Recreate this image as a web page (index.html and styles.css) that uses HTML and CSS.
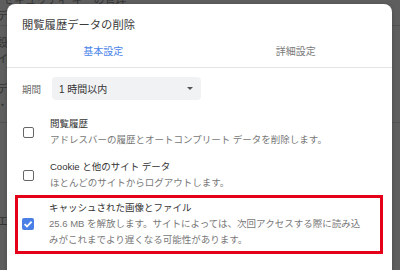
FILE: index.html
```html
<!DOCTYPE html>
<html lang="ja">
<head>
    <meta charset="UTF-8">
    <meta name="viewport" content="width=device-width, initial-scale=1.0">
    <title>閲覧履歴データの削除</title>
    <link rel="stylesheet" href="styles.css">
</head>
<body>
    <div class="page">
        <div class="backdrop">
            <div class="bg-section bg-first">
                <p class="bg-line bg-clip">セキュリティ キーの管理</p>
                <p class="bg-line">デバイス</p>
            </div>
            <div class="bg-section bg-second">
                <p class="bg-line">設定</p>
                <p class="bg-line">イメージ</p>
                <p class="bg-line bg-spaced">デザイン</p>
                <p class="bg-line">・</p>
            </div>
            <div class="bg-section bg-third">
                <p class="bg-line">エクステンション</p>
            </div>
        </div>

        <div class="dialog">
            <h1 class="dialog-title">閲覧履歴データの削除</h1>
            <div class="tabs">
                <div class="tab active">基本設定</div>
                <div class="tab">詳細設定</div>
            </div>

            <div class="period">
                <span class="period-label">期間</span>
                <div class="select">
                    <span>1 時間以内</span>
                    <span class="select-arrow"></span>
                </div>
            </div>

            <div class="options">
                <div class="option">
                    <span class="checkbox"></span>
                    <div class="option-text">
                        <div class="option-label">閲覧履歴</div>
                        <div class="option-desc">アドレスバーの履歴とオートコンプリート データを削除します。</div>
                    </div>
                </div>
                <div class="option">
                    <span class="checkbox"></span>
                    <div class="option-text">
                        <div class="option-label">Cookie と他のサイト データ</div>
                        <div class="option-desc">ほとんどのサイトからログアウトします。</div>
                    </div>
                </div>
                <div class="option highlight">
                    <span class="checkbox checked">
                        <svg viewBox="0 0 12 12" width="12" height="12"><path d="M2.6 6.2 L5 8.5 L9.6 3.6" fill="none" stroke="#fff" stroke-width="1.8"/></svg>
                    </span>
                    <div class="option-text">
                        <div class="option-label">キャッシュされた画像とファイル</div>
                        <div class="option-desc">25.6 MB を解放します。サイトによっては、次回アクセスする際に読み込みがこれまでより遅くなる可能性があります。</div>
                    </div>
                </div>
            </div>
        </div>
    </div>
</body>
</html>
```

FILE: styles.css
```css
body {
    margin: 0;
    padding: 0;
    font-family: "Liberation Sans", "Noto Sans CJK JP", sans-serif;
    background-color: #5e5e5e;
}
.page {
    position: relative;
    width: 400px;
    height: 270px;
    overflow: hidden;
}
.backdrop {
    color: #353535;
    font-size: 11px;
    line-height: 14px;
}
.bg-section {
    border-bottom: 1px solid #525252;
    padding-left: 0;
}
.bg-first {
    height: 32px;
}
.bg-second {
    height: 97px;
    padding-top: 10px;
    box-sizing: border-box;
}
.bg-third {
    border-bottom: none;
    padding-top: 91px;
}
.bg-line {
    margin: 0 0 2px -3px;
}
.bg-clip {
    margin-top: -7px;
    margin-left: 3px;
}
.bg-spaced {
    margin-top: 16px;
}
.dialog {
    position: absolute;
    left: 7px;
    top: 4px;
    width: 385px;
    height: 290px;
    background-color: #fff;
    border-radius: 8px;
    box-shadow: 0 1px 4px rgba(0,0,0,0.2);
}
.dialog-title {
    margin: 0;
    padding: 13px 15px 0;
    font-size: 11.3px;
    font-weight: normal;
    line-height: 16px;
    color: #3c3c3c;
}
.tabs {
    display: grid;
    grid-template-columns: 1fr 1fr;
    border-bottom: 1px solid #e3e3e3;
}
.tab {
    text-align: center;
    padding: 11px 0 7px;
    font-size: 10px;
    line-height: 16px;
    color: #7a7a7a;
}
.tab.active {
    color: #4b84ea;
}
.period {
    display: flex;
    align-items: center;
    margin-top: 9px;
    padding-left: 15px;
}
.period-label {
    width: 30px;
    font-size: 9.5px;
    color: #6a6a6a;
}
.select {
    display: flex;
    align-items: center;
    justify-content: space-between;
    width: 149px;
    height: 23px;
    padding: 0 8px 0 7px;
    box-sizing: border-box;
    background-color: #f1f2f4;
    border-radius: 4px;
    font-size: 10px;
    color: #333;
}
.select-arrow {
    width: 0;
    height: 0;
    border-left: 3px solid transparent;
    border-right: 3px solid transparent;
    border-top: 3px solid #555;
}
.options {
    display: flex;
    flex-direction: column;
    gap: 11px;
    margin-top: 16px;
    padding: 0 17px 0 16px;
}
.option {
    display: flex;
    align-items: center;
    gap: 16px;
}
.checkbox {
    flex: none;
    width: 11px;
    height: 11px;
    box-sizing: border-box;
    border: 1.5px solid #666;
    border-radius: 2px;
}
.checkbox.checked {
    display: flex;
    align-items: center;
    justify-content: center;
    width: 12px;
    height: 12px;
    border: none;
    background-color: #4a7fe6;
}
.option-text {
    font-size: 9.5px;
    line-height: 16px;
}
.option-label {
    color: #333;
}
.option-desc {
    color: #777;
}
.highlight {
    margin: -7px -8px 0;
    padding: 2px 12px 3px 4px;
    border: 3px solid #e5001a;
    gap: 15px;
}
```
